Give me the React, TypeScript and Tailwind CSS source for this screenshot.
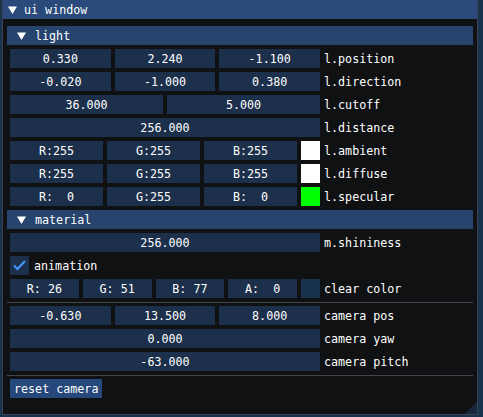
import React from 'react';

const Arrow = () => (
  <svg width="9" height="8" viewBox="0 0 9 8" className="shrink-0">
    <polygon points="0,0.5 9,0.5 4.5,8" fill="#ffffff" />
  </svg>
);

const Field = ({ text }: { text: string }) => (
  <div className="flex-1 h-[19px] bg-[#1d304b] flex items-center justify-center whitespace-pre pt-px">
    {text}
  </div>
);

const Swatch = ({ color }: { color: string }) => (
  <div className={`w-[19px] h-[19px] shrink-0 ${color}`} />
);

const Row = ({ label, children }: { label: string; children: React.ReactNode }) => (
  <div className="flex items-center h-[19px]">
    <div className="w-[310px] flex gap-[4px] shrink-0">{children}</div>
    <span className="ml-[4px] whitespace-pre pt-px">{label}</span>
  </div>
);

const Header = ({ title }: { title: string }) => (
  <div className="-mx-[3px] h-[19px] bg-[#26446d] flex items-center pl-[10px] gap-[9px]">
    <Arrow />
    <span className="pt-px">{title}</span>
  </div>
);

const Separator = () => <div className="h-px bg-[#43434d] -mx-[3px] -mb-[1px]" />;

export default function App() {
  return (
    <div className="w-[483px] h-[417px] bg-[#1a334d] text-white text-[11.7px] leading-[13px] font-['DejaVu_Sans_Mono',monospace] overflow-hidden">
      <div className="relative ml-[2px] w-[476px] h-[415px] bg-[#101113] border-x border-b border-[#3b4150] flex flex-col">
        <div className="h-[19px] bg-[#294a7a] flex items-center pl-[5px] gap-[7px] shrink-0">
          <Arrow />
          <span className="pt-px">ui window</span>
        </div>
        <div className="flex flex-col gap-[4px] pt-[7px] px-[7px]">
          <Header title="light" />
          <Row label="l.position">
            <Field text="0.330" />
            <Field text="2.240" />
            <Field text="-1.100" />
          </Row>
          <Row label="l.direction">
            <Field text="-0.020" />
            <Field text="-1.000" />
            <Field text="0.380" />
          </Row>
          <Row label="l.cutoff">
            <Field text="36.000" />
            <Field text="5.000" />
          </Row>
          <Row label="l.distance">
            <Field text="256.000" />
          </Row>
          <Row label="l.ambient">
            <Field text="R:255" />
            <Field text="G:255" />
            <Field text="B:255" />
            <Swatch color="bg-white" />
          </Row>
          <Row label="l.diffuse">
            <Field text="R:255" />
            <Field text="G:255" />
            <Field text="B:255" />
            <Swatch color="bg-white" />
          </Row>
          <Row label="l.specular">
            <Field text="R:  0" />
            <Field text="G:255" />
            <Field text="B:  0" />
            <Swatch color="bg-[#00ff00]" />
          </Row>
          <Header title="material" />
          <Row label="m.shininess">
            <Field text="256.000" />
          </Row>
          <div className="flex items-center h-[19px]">
            <div className="w-[19px] h-[19px] bg-[#1d304b] flex items-center justify-center">
              <svg width="19" height="19" viewBox="0 0 19 19">
                <polyline
                  points="4,9.5 7.5,13 15,5"
                  fill="none"
                  stroke="#4296fa"
                  strokeWidth="2.2"
                />
              </svg>
            </div>
            <span className="ml-[5px] pt-px">animation</span>
          </div>
          <Row label="clear color">
            <Field text="R: 26" />
            <Field text="G: 51" />
            <Field text="B: 77" />
            <Field text="A:  0" />
            <Swatch color="bg-[#1a334d]" />
          </Row>
          <Separator />
          <Row label="camera pos">
            <Field text="-0.630" />
            <Field text="13.500" />
            <Field text="8.000" />
          </Row>
          <Row label="camera yaw">
            <Field text="0.000" />
          </Row>
          <Row label="camera pitch">
            <Field text="-63.000" />
          </Row>
          <Separator />
          <div className="flex">
            <div className="h-[19px] px-[4px] bg-[#26487a] flex items-center pt-px">reset camera</div>
          </div>
        </div>
        <svg width="12" height="12" viewBox="0 0 12 12" className="absolute right-0 bottom-0">
          <polygon points="12,0 12,12 0,12" fill="#18283c" />
        </svg>
      </div>
    </div>
  );
}
